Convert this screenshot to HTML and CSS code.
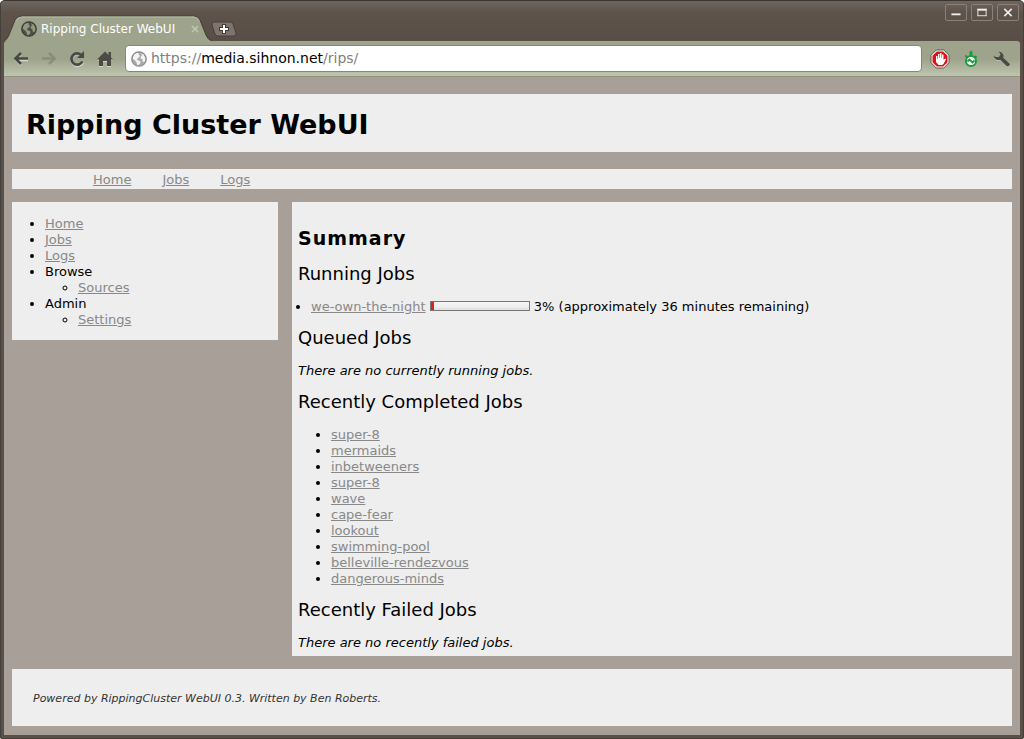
FILE: index.html
```html
<!DOCTYPE html>
<html lang="en">
<head>
<meta charset="utf-8">
<title>Ripping Cluster WebUI</title>
<link rel="stylesheet" href="styles.css">
</head>
<body>
<svg class="defs" aria-hidden="true">
  <symbol id="globe" viewBox="0 0 16 16">
    <circle cx="8" cy="8" r="7.2" fill="var(--sea)" stroke="var(--rim)" stroke-width="1.3"/>
    <path fill="var(--land)" d="M2 6 3.500 3.300 6 2 8 2.300 7.500 4 9 4.500 8 6.500 6.500 7 6.500 8.500 5 8.500 7.500 9.500 9.500 10.500 9 12.500 7.500 14.300 6 13.500 5.500 11 3.500 9 2 8zM10 2.300 12.500 3.500 14.200 6.500 14.200 9.500 13 11.500 11.500 10 11.500 8 9.500 7.500 10 5.500 11 4.500z"/>
  </symbol>
</svg>
<div class="window">
  <header class="chrome">
    <div class="titlebar">
      <div class="tab">
        <svg class="tab-shape" viewBox="0 0 208 26" preserveAspectRatio="none" aria-hidden="true">
          <path d="M0 26C4 24 5 20 7 15L11 5Q13 1 18 1H190Q194 1 196 5L202 20Q204 25 208 26z" fill="#9ea38b"/>
          <path d="M0 26C4 24 5 20 7 15L11 5Q13 1 18 1H190Q194 1 196 5L202 20Q204 25 208 26" fill="none" stroke="#453c36"/>
          <path d="M12 6Q14 2 18 2H190Q193 2 195 6" fill="none" stroke="#b7bda5"/>
        </svg>
        <div class="tab-content">
          <svg class="globe dark"><use href="#globe"/></svg>
          <span class="tab-title">Ripping Cluster WebUI</span>
          <button class="tab-close" aria-label="Close tab"><svg viewBox="0 0 8 8"><path d="M1 1l6 6M7 1L1 7" stroke="#c5c9b8" stroke-width="1.4"/></svg></button>
        </div>
      </div>
      <button class="new-tab" aria-label="New tab"><svg viewBox="0 0 26 16"><path d="M3 1H19Q21 1 22 3L25 12Q25 15 23 15H7Q5 15 4 13L1 4Q1 1 3 1z" fill="#7e736d" stroke="#4a403a"/><path d="M13 3v10M8 8h10" stroke="#453c36" stroke-width="4"/><path d="M13 4v8M9 8h8" stroke="#fff" stroke-width="2"/></svg></button>
      <div class="window-buttons">
        <button aria-label="Minimize"><svg viewBox="0 0 12 12"><path d="M1 8h10" stroke="#eee" stroke-width="2"/></svg></button>
        <button aria-label="Maximize"><svg viewBox="0 0 12 12"><path d="M1 2.500h10M1.500 2v8M10.500 2v8M1 9.500h10" stroke="#eee" fill="none"/><path d="M1 3h10" stroke="#eee" stroke-width="2"/></svg></button>
        <button aria-label="Close"><svg viewBox="0 0 12 12"><path d="M2 2l8 8M10 2l-8 8" stroke="#eee" stroke-width="1.700"/></svg></button>
      </div>
    </div>
    <div class="toolbar">
      <button class="tool" aria-label="Back"><svg viewBox="0 0 18 18"><path d="M9 4 4 9.500l5 5.500M4 10h12" fill="none" stroke="#d5d8ca" stroke-width="2.600"/><path d="M9 3 3.500 8.500 9 14M4 8.500h12" fill="none" stroke="#484844" stroke-width="2.600"/></svg></button>
      <button class="tool" aria-label="Forward" disabled><svg viewBox="0 0 18 18"><path d="M9 3l5.500 5.500L9 14M14 8.500H2" fill="none" stroke="#747864" stroke-width="2.600"/></svg></button>
      <button class="tool" aria-label="Reload"><svg viewBox="0 0 18 18"><path d="M15 12.500A6 6 0 1 1 13 5" fill="none" stroke="#d5d8ca" stroke-width="2.600"/><path d="M14.300 11.500A5.700 5.700 0 1 1 12.800 4.600" fill="none" stroke="#484844" stroke-width="2.700"/><path d="M16 1v7H9z" fill="#484844"/></svg></button>
      <button class="tool" aria-label="Home"><svg viewBox="0 0 18 18"><path d="M1 10.500 9 2.500l8 8h-2V17h-4v-5H7v5H3v-6.500z" fill="#d5d8ca"/><path d="M1 9.500 9 1.500l3.500 3.500V2H15v5.500l2 2h-2V16h-4v-5H7v5H3V9.500z" fill="#4c4b48"/></svg></button>
      <label class="address">
        <svg class="globe light"><use href="#globe"/></svg>
        <span class="url" role="textbox" aria-label="Address" tabindex="0">https://<b>media.sihnon.net</b>/rips/</span>
      </label>
      <button class="ext" aria-label="Ad blocker"><svg viewBox="0 0 20 20"><path d="M6.300 1h7.400L19 6.300v7.400L13.700 19H6.300L1 13.700V6.300z" fill="#fff" stroke="#555"/><path d="M6.800 2.500h6.400l4.300 4.300v6.400l-4.300 4.300H6.800l-4.300-4.300V6.800z" fill="#dc1418"/><path d="M6 7h1.500v3H8V5h1.500v4H10V4h1.500v5h.5V5.500h1.500V11l1.500-1.500 1 .8-2.500 4.700-1.500 1H8.500L6 13z" fill="#fff"/></svg></button>
      <button class="ext" aria-label="Downloads"><svg viewBox="0 0 20 20"><path d="M8.500 3Q10 .5 11.500 3L11.500 7h-3zM3.500 6 6 6.500 7.500 8 5.500 10zM16 7l-2-.5-2 1.500 3 2z" fill="#199c3f"/><circle cx="10" cy="12" r="6" fill="#199c3f"/><circle cx="10" cy="12" r="4" fill="#fff"/><path d="M6.500 12.500 8.500 10.500 11.500 13.500 13.500 11.500" fill="none" stroke="#199c3f" stroke-width="1.800"/></svg></button>
      <button class="ext" aria-label="Settings"><svg viewBox="0 0 20 20"><path d="M2 8.500Q4 13 9 11.500L14.500 17.500Q18 19 18 15L11.500 9.500Q12 4 7 3.500L9 6.500 7.500 9 4.500 9z" fill="#d5d8ca"/><path d="M1.500 7Q3 12 8.500 11L14.500 17Q17.500 18.500 18 15L11.500 9Q12.500 3.500 6.500 2.500L8.500 5.500 7 8 4 8z" fill="#4b4a46"/></svg></button>
    </div>
  </header>
  <div class="page">
    <div class="panel banner"><h1>Ripping Cluster WebUI</h1></div>
    <nav class="panel topnav"><a href="#home">Home</a><a href="#jobs">Jobs</a><a href="#logs">Logs</a></nav>
    <div class="columns">
      <nav class="panel sidebar">
        <ul>
          <li><a href="#home">Home</a></li>
          <li><a href="#jobs">Jobs</a></li>
          <li><a href="#logs">Logs</a></li>
          <li>Browse<ul><li><a href="#sources">Sources</a></li></ul></li>
          <li>Admin<ul><li><a href="#settings">Settings</a></li></ul></li>
        </ul>
      </nav>
      <main class="panel main">
        <h2>Summary</h2>
        <h3>Running Jobs</h3>
        <ul class="running"><li><a href="#job">we-own-the-night</a> <span class="progress" role="progressbar" aria-label="Progress" aria-valuenow="3"><span class="bar" style="width:3%"></span></span> 3% (approximately 36 minutes remaining)</li></ul>
        <h3>Queued Jobs</h3>
        <p><em>There are no currently running jobs.</em></p>
        <h3>Recently Completed Jobs</h3>
        <ul>
          <li><a href="#j1">super-8</a></li>
          <li><a href="#j2">mermaids</a></li>
          <li><a href="#j3">inbetweeners</a></li>
          <li><a href="#j4">super-8</a></li>
          <li><a href="#j5">wave</a></li>
          <li><a href="#j6">cape-fear</a></li>
          <li><a href="#j7">lookout</a></li>
          <li><a href="#j8">swimming-pool</a></li>
          <li><a href="#j9">belleville-rendezvous</a></li>
          <li><a href="#j10">dangerous-minds</a></li>
        </ul>
        <h3>Recently Failed Jobs</h3>
        <p><em>There are no recently failed jobs.</em></p>
      </main>
    </div>
    <footer class="panel footer">Powered by RippingCluster WebUI 0.3. Written by Ben Roberts.</footer>
  </div>
</div>
</body>
</html>
```
FILE: styles.css
```css
* { box-sizing: border-box; }
body { margin: 0; background: #fff; font: 13px/16px Verdana, "DejaVu Sans", sans-serif; color: #000; }
button { margin: 0; padding: 0; border: 0; background: none; }
button svg { display: block; width: 100%; height: 100%; }
.defs { position: absolute; width: 0; height: 0; }
.window { min-height: 100vh; display: flex; flex-direction: column; padding: 0 4px 4px; background: #5b5047; border: solid #3b3531; border-width: 1px 0 0; border-radius: 5px 5px 3px 3px; box-shadow: inset 1px 0 #45403c, inset -1px 0 #45403c, inset 0 -1px #45403c, inset 0 1px #81766d; }
.titlebar { height: 40px; display: flex; align-items: flex-end; margin: 0 -3px; padding: 0 3px; background: linear-gradient(#70655d 0, #5e534b 12px, #594e45); border-radius: 4px 4px 0 0; }
.tab { display: grid; width: 208px; height: 26px; }
.tab > * { grid-area: 1 / 1; }
.tab-shape { width: 208px; height: 26px; }
.tab-content { display: flex; align-items: center; padding: 2px 13px 0 17px; z-index: 1; }
.globe { width: 16px; height: 16px; flex: none; }
.dark { --sea: #4c4f45; --land: #959983; --rim: #3c3e36; }
.light { --sea: #aaa; --land: #f4f4f4; --rim: #8a8a8a; }
.tab-title { flex: 1; margin-left: 4px; color: #fff; font: 12px/16px "DejaVu Sans", sans-serif; white-space: nowrap; }
.tab-close { width: 8px; height: 8px; }
.new-tab { width: 26px; height: 16px; margin: 0 0 4px -1px; }
.window-buttons { display: flex; gap: 4px; align-self: flex-start; margin: 3px 1px 0 auto; }
.window-buttons button { width: 22px; height: 17px; padding: 2px 4px; border: 1px solid #8b8179; border-radius: 2px; }
.toolbar { display: flex; align-items: center; height: 36px; padding: 0 8px; border-bottom: 1px solid #8d937b; border-radius: 3px 3px 0 0; background: linear-gradient(#9ea38b 0, #9ea38b 18px, #bdc3ae 34px); }
.tool { width: 18px; height: 18px; margin-right: 10px; }
.tool:disabled { opacity: .5; }
.address { flex: 1; display: flex; align-items: center; height: 27px; padding: 0 5px; margin: 0 8px 0 1px; border: 1px solid #84896f; border-radius: 4px; background: #fff; }
.url { margin-left: 4px; padding-bottom: 1px; font: 14px/20px "DejaVu Sans", sans-serif; color: #808080; }
.url b { font-weight: normal; color: #000; }
.ext { width: 20px; height: 20px; margin-right: 11px; }
.ext:last-child { margin-right: 0; }
.page { flex: 1; padding: 17px 8px 9px; background: #a79f98; }
.panel { background: #eee; }
.banner { padding: 13px 14px 9px; }
h1 { margin: 0; font-size: 27px; line-height: 36px; }
.topnav { display: flex; gap: 31px; margin: 17px 0 13px; padding: 3px 81px 1px; }
a { color: #888; }
.columns { display: flex; gap: 14px; align-items: flex-start; }
.sidebar { width: 266px; flex: none; padding: 14px 0 12px; }
ul { margin: 0; padding-left: 33px; }
.main { flex: 1; padding: 24px 6px 5px; }
h2 { margin: 0 0 12px; font-size: 19px; line-height: 24px; letter-spacing: 1px; }
h3 { margin: 0; font-size: 18px; font-weight: normal; line-height: 24px; }
.main ul, .main p { margin: 13px 0 11px; }
.main .running { padding-left: 13px; }
.main p:last-child { margin-bottom: 0; }
.progress { display: inline-block; width: 100px; height: 10px; border: 1px solid #777; background: linear-gradient(#f6f6f6, #eee 60%, #ddd); }
.bar { display: block; height: 100%; background: #dc2222; }
.footer { margin-top: 13px; padding: 21px 21px 19px; font-size: 11px; font-style: italic; line-height: 17px; color: #333; }
```
